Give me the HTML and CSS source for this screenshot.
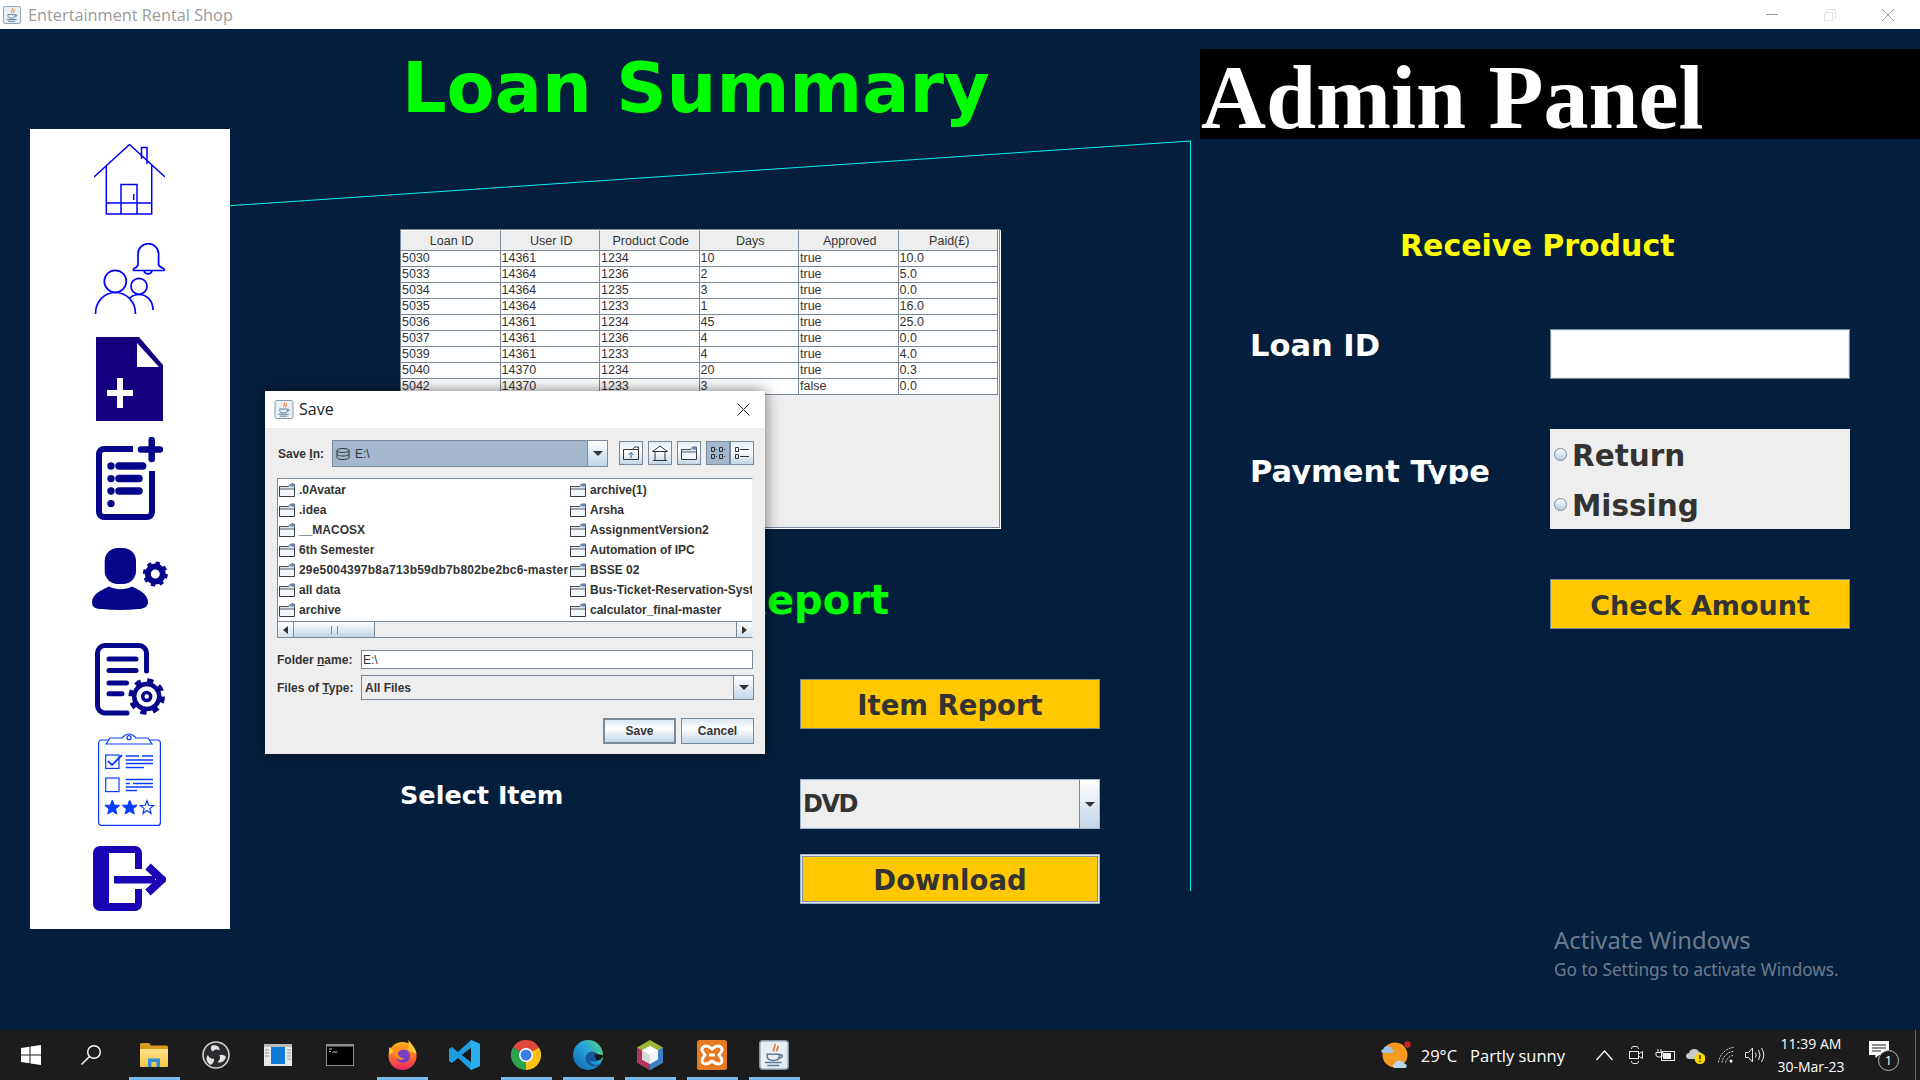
FILE: index.html
```html
<!DOCTYPE html>
<html lang="en">
<head>
    <meta charset="UTF-8">
    <title>Entertainment Rental Shop</title>
    <link rel="stylesheet" href="styles.css">
</head>
<body>
    <svg class="svg-defs" aria-hidden="true">
        <defs>
            <linearGradient id="fxGrad" x1="0" y1="0" x2="0" y2="1">
                <stop offset="0" stop-color="#ffb01f"/>
                <stop offset="0.55" stop-color="#ff6a2b"/>
                <stop offset="1" stop-color="#e8246b"/>
            </linearGradient>
            <linearGradient id="edgeGrad" x1="0" y1="1" x2="1" y2="0">
                <stop offset="0" stop-color="#0c63b8"/>
                <stop offset="0.6" stop-color="#2aa7d8"/>
                <stop offset="1" stop-color="#5fdc6a"/>
            </linearGradient>
            <linearGradient id="folderGrad" x1="0" y1="0" x2="0" y2="1">
                <stop offset="0" stop-color="#ffe38a"/>
                <stop offset="1" stop-color="#f6c445"/>
            </linearGradient>
            <symbol id="javaIcon" viewBox="0 0 20 20">
                <rect x="0.5" y="0.5" width="19" height="19" rx="2" fill="#e9eef3" stroke="#8296a8"/>
                <path d="M10.5 2.5c1.5 2-2 3-.5 5M12.5 4c.8 1.4-1.4 2-.4 3.5" fill="none" stroke="#e0762a" stroke-width="1.1"/>
                <path d="M5.5 9.5h8v1.5c0 1.8-1.6 2.6-4 2.6s-4-.8-4-2.6zM13.5 10h1.5c.8 0 .8 1.8-1.5 2" fill="none" stroke="#5a7d9a" stroke-width="1"/>
                <path d="M4 15h11M5.5 17h8" stroke="#5a7d9a" stroke-width="1"/>
            </symbol>
            <symbol id="folderIcon" viewBox="0 0 16 14">
                <path d="M.5 3.5h15v10H.5z" fill="#f3f6fa" stroke="#333a44"/>
                <path d="M.5 3.5h9l2-2.5h4v5H.5z" fill="#dfe7f0" stroke="#333a44" stroke-width=".8"/>
                <path d="M11.5 1h4v2.5h-4z" fill="#6382bf"/>
            </symbol>
            <symbol id="starFill" viewBox="-7 -7 14 13">
                <polygon points="0,-7 1.76,-2.43 6.66,-2.16 2.85,.93 4.11,5.66 0,3 -4.11,5.66 -2.85,.93 -6.66,-2.16 -1.76,-2.43" fill="#0a3cff" stroke="#0a3cff"/>
            </symbol>
        </defs>
    </svg>

    <header class="titlebar">
        <svg class="app-icon" width="20" height="18"><use href="#javaIcon"/></svg>
        <span class="app-title">Entertainment Rental Shop</span>
        <div class="window-controls">
            <svg width="12" height="12" viewBox="0 0 12 12"><path d="M0 5.5h12" stroke="#9a9a9a"/></svg>
            <svg width="12" height="12" viewBox="0 0 12 12"><path d="M.5 3.5h8v8h-8zM3 3V.5h8.5V9H9" fill="none" stroke="#e3e3e3"/></svg>
            <svg width="12" height="12" viewBox="0 0 12 12"><path d="M0 0l12 12M12 0L0 12" stroke="#9a9a9a"/></svg>
        </div>
    </header>

    <div class="app">
        <!-- cyan frame line behind the panels -->
        <svg class="frame-line" width="1920" height="1001" viewBox="0 0 1920 1001">
            <path d="M230 176.7L1190.5 112V862" fill="none" stroke="#00f0f0" stroke-width="1"/>
        </svg>

        <nav class="sidebar">
            <a class="side-item" href="#">
                <svg width="71" height="71" viewBox="0 0 71 71" fill="none" stroke="#0000ff" stroke-width="1.5">
                    <path d="M0 33L35.5 .5 71 33M12.3 21.5V70H57.7V21.5M12.3 59H57.7M27 70V40.5H43V70M39.7 50v6M47.5 15V3.5h5.5V20"/>
                </svg>
            </a>
            <a class="side-item" href="#">
                <svg width="72" height="72" viewBox="0 0 72 72" fill="none" stroke="#0000ff" stroke-width="1.7">
                    <path d="M44 22V11a10.3 10.3 0 0 1 20.6 0V22q1 2 5 3.5 1.5 1.5 0 2H40q-1.5-.5 0-2 3-1.5 4-3.5zM50 28a4.2 4 0 0 0 8 0"/>
                    <circle cx="21.3" cy="38.3" r="11"/>
                    <path d="M1.5 71c0-13 9-21.5 19.8-21.5S41.5 58 41.5 71"/>
                    <circle cx="45" cy="43.3" r="8"/>
                    <path d="M36 55c2-2 5-3.5 9-3.5 8 0 14 6.5 14 15.5"/>
                </svg>
            </a>
            <a class="side-item" href="#">
                <svg width="67" height="84" viewBox="0 0 67 84">
                    <path d="M0 0H43L67 28V84H0z" fill="#14007f"/>
                    <path d="M41 6L63 30H41z" fill="#fff"/>
                    <path d="M11 53H37V59H11zM21 41H27V71H21z" fill="#fff"/>
                </svg>
            </a>
            <a class="side-item" href="#">
                <svg width="67" height="84" viewBox="0 0 67 84" fill="none" stroke="#06068a">
                    <path d="M37 12H8a5 5 0 0 0-5 5V75a5 5 0 0 0 5 5H51a5 5 0 0 0 5-5V34" stroke-width="6"/>
                    <path d="M55.7 3V22M45 12.5H64" stroke-width="6.5" stroke-linecap="round"/>
                    <path d="M23 29H46.7M23 41.6H43M23 54H43" stroke-width="7.5" stroke-linecap="round"/>
                    <g fill="#06068a" stroke="none">
                        <circle cx="15" cy="29" r="3.7"/><circle cx="15" cy="41.6" r="3.7"/>
                        <circle cx="15" cy="54" r="3.7"/><circle cx="15" cy="66.6" r="3.7"/>
                    </g>
                </svg>
            </a>
            <a class="side-item" href="#">
                <svg width="76" height="62" viewBox="0 0 76 62" fill="#06068a">
                    <rect x="12.7" y="0" width="31.3" height="36" rx="13"/>
                    <path d="M0 54C0 46 10 42 17 38.5C24 42 33 42 40 38.5C47 42 56 46 56 54C56 60 50 61 46 61Q28 63 10 61C4 61 0 60 0 54Z"/>
                    <circle cx="63.3" cy="26" r="7.5" fill="none" stroke="#06068a" stroke-width="6"/>
                    <circle cx="63.3" cy="26" r="10.5" fill="none" stroke="#06068a" stroke-width="4" stroke-dasharray="4.1 4.15"/>
                </svg>
            </a>
            <a class="side-item" href="#">
                <svg width="70" height="73" viewBox="0 0 70 73" fill="none" stroke="#06068a" stroke-width="5" stroke-linecap="round">
                    <path d="M32 70H10a7.5 7.5 0 0 1-7.5-7.5V10A7.5 7.5 0 0 1 10 2.5H44A7.5 7.5 0 0 1 51.5 10V28"/>
                    <path d="M14 16H41M14 27.5H41M14 40H31.5M14 50.7H27"/>
                    <circle cx="51.7" cy="53.6" r="15.5" stroke-width="5.5" stroke-dasharray="6 6.17" stroke-linecap="butt"/>
                    <circle cx="51.7" cy="53.6" r="12.5" stroke-width="4.5" fill="#fff"/>
                    <circle cx="51.7" cy="53.6" r="4" stroke-width="3.5"/>
                </svg>
            </a>
            <a class="side-item" href="#">
                <svg width="63" height="94" viewBox="0 0 63 94" fill="none" stroke="#0a3cff" stroke-width="1.2">
                    <rect x=".6" y="8" width="61.8" height="85.4" rx="3"/>
                    <path d="M8 12L12 6H24Q31-2 38 6H50L54 12Z" fill="#fff"/>
                    <circle cx="31" cy="5.7" r="2"/>
                    <rect x="7.7" y="23" width="13.3" height="13.4"/>
                    <path d="M10 29l4 4 10-10" stroke-width="1.8"/>
                    <rect x="7.7" y="46" width="13.3" height="13.6"/>
                    <path d="M27.7 24H41M44 24H55M27.7 28H55M27.7 31.5H55M27.7 35.5H46M27.7 47.5H55M27.7 51.5H32M35 51.5H55M27.7 55H55M27.7 58.5H39" stroke-width="1.3"/>
                    <use href="#starFill" x="6.8" y="68.2" width="15" height="14"/>
                    <use href="#starFill" x="24.2" y="68.2" width="15" height="14"/>
                    <polygon transform="translate(49 75.7)" points="0,-7 1.76,-2.43 6.66,-2.16 2.85,.93 4.11,5.66 0,3 -4.11,5.66 -2.85,.93 -6.66,-2.16 -1.76,-2.43"/>
                </svg>
            </a>
            <a class="side-item" href="#">
                <svg width="73" height="66" viewBox="0 0 73 66" fill="#1a05b5">
                    <path d="M7 0H42A7 7 0 0 1 49 7V23H42V7H16V57H42V43H49V58A7 7 0 0 1 42 65H7A7 7 0 0 1 0 58V7A7 7 0 0 1 7 0Z"/>
                    <path d="M21 30H62V37.5H21z"/>
                    <path d="M55 20.5L69 33.5 55 46.5" fill="none" stroke="#1a05b5" stroke-width="8"/>
                </svg>
            </a>
        </nav>

        <section class="center-col">
            <h1 class="page-title">Loan Summary</h1>

            <div class="table-panel">
                <table class="loan-table">
                    <thead>
                        <tr><th>Loan ID</th><th>User ID</th><th>Product Code</th><th>Days</th><th>Approved</th><th>Paid(£)</th></tr>
                    </thead>
                    <tbody>
                        <tr><td>5030</td><td>14361</td><td>1234</td><td>10</td><td>true</td><td>10.0</td></tr>
                        <tr><td>5033</td><td>14364</td><td>1236</td><td>2</td><td>true</td><td>5.0</td></tr>
                        <tr><td>5034</td><td>14364</td><td>1235</td><td>3</td><td>true</td><td>0.0</td></tr>
                        <tr><td>5035</td><td>14364</td><td>1233</td><td>1</td><td>true</td><td>16.0</td></tr>
                        <tr><td>5036</td><td>14361</td><td>1234</td><td>45</td><td>true</td><td>25.0</td></tr>
                        <tr><td>5037</td><td>14361</td><td>1236</td><td>4</td><td>true</td><td>0.0</td></tr>
                        <tr><td>5039</td><td>14361</td><td>1233</td><td>4</td><td>true</td><td>4.0</td></tr>
                        <tr><td>5040</td><td>14370</td><td>1234</td><td>20</td><td>true</td><td>0.3</td></tr>
                        <tr><td>5042</td><td>14370</td><td>1233</td><td>3</td><td>false</td><td>0.0</td></tr>
                    </tbody>
                </table>
            </div>

            <h2 class="report-title">Report</h2>

            <div class="report-form">
                <button class="yellow-btn item-report" type="button">Item Report</button>
                <span class="select-label">Select Item</span>
                <div class="big-combo">
                    <span class="big-combo-value">DVD</span>
                    <span class="big-combo-arrow"><i class="arrow-down"></i></span>
                </div>
                <button class="yellow-btn download" type="button">Download</button>
            </div>
        </section>

        <section class="right-col">
            <div class="admin-bar">Admin Panel</div>
            <h2 class="receive-title">Receive Product</h2>
            <div class="receive-form">
                <label class="form-label" for="loanId">Loan ID</label>
                <input class="loan-input" id="loanId" type="text">
                <span class="form-label payment-label">Payment Type</span>
                <div class="radio-panel">
                    <label class="radio-row"><i class="radio-dot"></i>Return</label>
                    <label class="radio-row"><i class="radio-dot"></i>Missing</label>
                </div>
                <button class="yellow-btn check-amount" type="button">Check Amount</button>
            </div>
        </section>

        <div class="activate">
            <div class="activate-head">Activate Windows</div>
            <div class="activate-sub">Go to Settings to activate Windows.</div>
        </div>

        <div class="save-dialog">
            <div class="dialog-title">
                <svg width="20" height="19"><use href="#javaIcon"/></svg>
                <span class="dialog-name">Save</span>
                <svg class="dialog-close" width="13" height="13" viewBox="0 0 13 13"><path d="M.5.5l12 12M12.5.5l-12 12" stroke="#222" stroke-width="1"/></svg>
            </div>
            <div class="dialog-body">
                <div class="save-in-row">
                    <span class="dlg-label save-in-label">Save <u>I</u>n:</span>
                    <div class="dlg-combo save-in-combo">
                        <span class="dlg-combo-value selected">
                            <svg width="14" height="12" viewBox="0 0 14 12" fill="none" stroke="#333"><ellipse cx="7" cy="2.5" rx="6" ry="2"/><path d="M1 2.5v7c0 1 2.5 2 6 2s6-1 6-2v-7M1 6c0 1 2.5 2 6 2s6-1 6-2"/></svg>
                            <span>E:\</span>
                        </span>
                        <span class="dlg-combo-arrow"><i class="arrow-down"></i></span>
                    </div>
                    <div class="dlg-tools">
                        <span class="tool-btn">
                            <svg width="16" height="14" viewBox="0 0 16 14" fill="none" stroke="#333"><path d="M.5 3.5h15v10H.5zM9.5 3.5l2-2.5h4v2.5"/><path d="M8 12V6.5M5.5 9L8 6.5 10.5 9" stroke="#2b5f8e"/></svg>
                        </span>
                        <span class="tool-btn">
                            <svg width="16" height="16" viewBox="0 0 16 16" fill="none" stroke="#333"><path d="M.5 6.5L8 1l7.5 5.5zM3 6.5v9h10v-9M1 15.5h14"/></svg>
                        </span>
                        <span class="tool-btn">
                            <svg width="16" height="14" viewBox="0 0 16 14"><use href="#folderIcon"/></svg>
                        </span>
                        <span class="tool-btn tool-pressed tool-joined">
                            <svg width="16" height="14" viewBox="0 0 16 14" fill="none" stroke="#333"><path d="M1.5 1.5h3v4h-3zM1.5 8.5h3v4h-3zM9.5 1.5h3v4h-3zM9.5 8.5h3v4h-3zM6 3.5h1M6 10.5h1M14 3.5h1M14 10.5h1"/></svg>
                        </span>
                        <span class="tool-btn">
                            <svg width="16" height="14" viewBox="0 0 16 14" fill="none" stroke="#333"><path d="M1.5 1.5h3v4h-3zM1.5 8.5h3v4h-3zM6 3.5h9M6 10.5h9"/></svg>
                        </span>
                    </div>
                </div>

                <div class="file-list">
                    <div class="file-grid">
                        <div class="file-item"><svg width="16" height="14"><use href="#folderIcon"/></svg><span>.0Avatar</span></div>
                        <div class="file-item"><svg width="16" height="14"><use href="#folderIcon"/></svg><span>archive(1)</span></div>
                        <div class="file-item"><svg width="16" height="14"><use href="#folderIcon"/></svg><span>.idea</span></div>
                        <div class="file-item"><svg width="16" height="14"><use href="#folderIcon"/></svg><span>Arsha</span></div>
                        <div class="file-item"><svg width="16" height="14"><use href="#folderIcon"/></svg><span>__MACOSX</span></div>
                        <div class="file-item"><svg width="16" height="14"><use href="#folderIcon"/></svg><span>AssignmentVersion2</span></div>
                        <div class="file-item"><svg width="16" height="14"><use href="#folderIcon"/></svg><span>6th Semester</span></div>
                        <div class="file-item"><svg width="16" height="14"><use href="#folderIcon"/></svg><span>Automation of IPC</span></div>
                        <div class="file-item"><svg width="16" height="14"><use href="#folderIcon"/></svg><span class="long-name">29e5004397b8a713b59db7b802be2bc6-master</span></div>
                        <div class="file-item"><svg width="16" height="14"><use href="#folderIcon"/></svg><span>BSSE 02</span></div>
                        <div class="file-item"><svg width="16" height="14"><use href="#folderIcon"/></svg><span>all data</span></div>
                        <div class="file-item"><svg width="16" height="14"><use href="#folderIcon"/></svg><span>Bus-Ticket-Reservation-System</span></div>
                        <div class="file-item"><svg width="16" height="14"><use href="#folderIcon"/></svg><span>archive</span></div>
                        <div class="file-item"><svg width="16" height="14"><use href="#folderIcon"/></svg><span>calculator_final-master</span></div>
                    </div>
                    <div class="h-scroll">
                        <span class="scroll-btn"><i class="arrow-left"></i></span>
                        <span class="scroll-thumb"><i class="thumb-grip"></i></span>
                        <span class="scroll-track"></span>
                        <span class="scroll-btn"><i class="arrow-right"></i></span>
                    </div>
                </div>

                <div class="dlg-field folder-row">
                    <span class="dlg-label field-label">Folder <u>n</u>ame:</span>
                    <input class="dlg-input" type="text" value="E:\">
                </div>
                <div class="dlg-field type-row">
                    <span class="dlg-label field-label">Files of <u>T</u>ype:</span>
                    <div class="dlg-combo type-combo">
                        <span class="dlg-combo-value">All Files</span>
                        <span class="dlg-combo-arrow"><i class="arrow-down"></i></span>
                    </div>
                </div>
                <div class="dlg-actions">
                    <button class="dlg-btn dlg-default" type="button">Save</button>
                    <button class="dlg-btn" type="button">Cancel</button>
                </div>
            </div>
        </div>
    </div>

    <footer class="taskbar">
        <div class="task-left">
            <span class="task-item start-item">
                <svg width="20" height="20" viewBox="0 0 20 20" fill="#fff"><path d="M0 3l8.500-1.300V9.500H0zM9.500 1.500L20 0V9.500H9.500zM0 10.500H8.500V18.300L0 17zM9.500 10.500H20V20L9.500 18.500z"/></svg>
            </span>
            <span class="task-item search-item">
                <svg width="20" height="20" viewBox="0 0 20 20" fill="none" stroke="#fff" stroke-width="1.4"><circle cx="13" cy="7" r="6.3"/><path d="M8.500 11.500L.5 19.500"/></svg>
            </span>
            <span class="task-item active">
                <svg width="28" height="24" viewBox="0 0 28 24"><path d="M0 1.500Q0 0 1.500 0H9l2 2.500h15.500Q28 2.500 28 4V22.500Q28 24 26.500 24H1.500Q0 24 0 22.500z" fill="#d99a1c"/><path d="M0 6H28V22.500Q28 24 26.500 24H1.500Q0 24 0 22.500z" fill="url(#folderGrad)"/><path d="M8 24V15.500H20V24H16.500V19H11.500V24z" fill="#2f8fd6"/></svg>
            </span>
            <span class="task-item">
                <svg width="28" height="28" viewBox="0 0 28 28"><circle cx="14" cy="14" r="13" fill="#2a2a2e" stroke="#d2d2d2" stroke-width="1.6"/><path d="M10 4.500c5-1 8 1.500 7.500 5-1.500-1.500-5-1.800-6.500 1-2-1-3-4 -1-6zM24 16c-1.500 5-5.500 6.500-8.500 5 1.800-1 3.500-4 1.800-6.700 2-1.300 5.200-.6 6.700 1.700zM8.500 24c-4.500-3-5-7.500-2.500-10 .5 2 3.500 4.500 6 3.500.5 2.300-.8 5.300-3.500 6.500z" fill="#e4e4e4"/></svg>
            </span>
            <span class="task-item">
                <svg width="28" height="22" viewBox="0 0 28 22"><rect width="28" height="22" fill="#e9e9e9"/><rect y="0" width="28" height="3" fill="#b9b9b9"/><rect x="7" y="3" width="14" height="17" fill="#0f7bd8"/><path d="M1 6h4M1 9h4M1 12h4M23 6h4M23 9h4M23 12h4M23 15h4" stroke="#999"/></svg>
            </span>
            <span class="task-item">
                <svg width="28" height="22" viewBox="0 0 28 22"><rect width="28" height="22" fill="#8d8d8d"/><rect x="1" y="2.5" width="26" height="18.5" fill="#000"/><path d="M3 5h3M3 7.5h2M6.500 8h5" stroke="#c8c8c8"/></svg>
            </span>
            <span class="task-item active">
                <svg width="29" height="30" viewBox="0 0 29 30"><circle cx="14.5" cy="16" r="14" fill="url(#fxGrad)"/><path d="M20 0c3 3 8 8 8.500 14L20 10c1-3 1-6 0-10zM1 7l5 4-5 4z" fill="#ffc631"/><circle cx="15" cy="16" r="7" fill="#7b3ec2"/><path d="M5 11c4-5 10-4 13-1-4-1-7 0-8 3 0 3 3 6 7 5-4 4-11 1-12-7z" fill="#ff8a1e"/></svg>
            </span>
            <span class="task-item">
                <svg width="31" height="30" viewBox="0 0 31 30"><path d="M22 0L31 4V26L22 30 9 18 3 23 0 21V9L3 7 9 12zM22 8L13 15 22 22z" fill="#1f9ce0"/><path d="M22 0L31 4V26L22 30z" fill="#2ab0ef"/><path d="M22 8L13 15 22 22z" fill="#191919"/></svg>
            </span>
            <span class="task-item active">
                <svg width="30" height="30" viewBox="0 0 30 30"><path d="M15 15L2 7.500A15 15 0 0 1 28 7.500z" fill="#dd4a3a"/><path d="M15 15L28 7.500A15 15 0 0 1 15 30z" fill="#fbc116"/><path d="M15 15L15 30A15 15 0 0 1 2 7.500z" fill="#2ca14e"/><circle cx="15" cy="15" r="7" fill="#fff"/><circle cx="15" cy="15" r="5.5" fill="#3b7de8"/></svg>
            </span>
            <span class="task-item active">
                <svg width="30" height="30" viewBox="0 0 30 30"><circle cx="15" cy="15" r="15" fill="url(#edgeGrad)"/><path d="M30 17c-3-7-12-8-16-3-3 4-1 10 4 12 5 1.500 9 0 11-3-5 3-11 2-12-2 4 1 10 1 13-4z" fill="#15589f"/><path d="M16 12c5-2 11 1 14 8 0-3 0-4-.5-6-4-3-9-4-13.500-2z" fill="#5fdc6a"/><path d="M31 15.500c-3-1-7-2-10 0 1 1 2 3 2 4.500 3 .5 6-1 8-4.500z" fill="#191919"/></svg>
            </span>
            <span class="task-item active">
                <svg width="26" height="30" viewBox="0 0 26 30"><path d="M13 0L26 7.500V22.500L13 30 0 22.500V7.500z" fill="#9ab53a"/><path d="M0 7.500L13 15V30L0 22.500z" fill="#b3325f"/><path d="M26 7.500L13 15V30L26 22.500z" fill="#3d7fc9"/><path d="M13 6L21 10.500V19.500L13 24 5 19.500V10.500z" fill="#f4f4f4"/><path d="M13 15L21 10.500 13 6 5 10.500z" fill="#fff"/><path d="M13 15V24L5 19.500V10.500z" fill="#d7d7d7"/></svg>
            </span>
            <span class="task-item active">
                <svg width="30" height="30" viewBox="0 0 30 30"><rect width="30" height="30" rx="2.5" fill="#e57a20"/><path d="M9 6c3 0 4 2 6 3 2-1 3-3 6-3 3.500 0 5 3 3.500 5.500L22 15l2.500 3.500C26 21 24.500 24 21 24c-3 0-4-2-6-3-2 1-3 3-6 3-3.500 0-5-3-3.500-5.500L8 15l-2.500-3.500C4 9 5.500 6 9 6z" fill="none" stroke="#fff" stroke-width="3"/><path d="M12 15h6" stroke="#fff" stroke-width="3"/></svg>
            </span>
            <span class="task-item active">
                <svg width="30" height="30" viewBox="0 0 30 30"><use href="#javaIcon"/></svg>
            </span>
        </div>

        <div class="task-right">
            <svg class="tray-weather" width="30" height="28" viewBox="0 0 30 28"><circle cx="14" cy="14" r="12.5" fill="#f39a1f"/><circle cx="26.5" cy="3.5" r="3.2" fill="#c9261d"/><path d="M2 12c-2.500 0-2-4 .5-4 .5-4 7-4 8 0 3 0 3 4 0 4z" fill="#9fc4e8"/><path d="M14 27c-3 0-3-4 0-4.500.5-4 8-4 9 0 3 0 4 4.500 1 4.500z" fill="#bcd6ef"/></svg>
            <span class="tray-text">29°C<span class="weather-gap"></span>Partly sunny</span>
            <svg class="tray-caret" width="17" height="11" viewBox="0 0 17 11" fill="none" stroke="#fff" stroke-width="1.2"><path d="M.5 10L8.500 1l8 9"/></svg>
            <svg class="tray-cam" width="14" height="18" viewBox="0 0 14 18" fill="none" stroke="#e8e8e8"><path d="M2.500 3C2.500 1.500 3 .5 5 .5h2c2 0 2.500 1 2.500 2.500M2.500 15c0 1.500.5 2.500 2.500 2.500h2c2 0 2.500-1 2.500-2.500"/><rect x=".5" y="5.5" width="9" height="7"/><path d="M9.500 8l4-2.500v7l-4-2.500"/></svg>
            <svg class="tray-batt" width="20" height="12" viewBox="0 0 20 12"><path d="M3 3V0M6 3V0M1 3.500h7V6Q8 8 5 8H4Q1 8 1 6z" fill="none" stroke="#eee"/><rect x="6.5" y="2.5" width="13" height="9" fill="none" stroke="#eee"/><rect x="8" y="4" width="8" height="6" fill="#eee"/></svg>
            <svg class="tray-cloud" width="20" height="17" viewBox="0 0 20 17"><path d="M4 12C0 12 0 6 4 6c1-5 9-5 10-1 3 0 4 3 2 7z" fill="#c9c9c9"/><circle cx="15" cy="11.5" r="5.5" fill="#f8d800"/><path d="M15 8v4M15 13.500v1.500" stroke="#222" stroke-width="1.4"/></svg>
            <svg class="tray-wifi" width="16" height="16" viewBox="0 0 16 16" fill="none" stroke="#cfcfcf"><path d="M.5 15.500C1 8 8 1 15.500 .5M4 15.500C4.500 10 10 4.500 15.500 4.500M7.500 15.500C8 12.500 12 8.500 15 8.500" stroke-dasharray="2 1"/><circle cx="13" cy="14" r="1.5" fill="#fff" stroke="none"/></svg>
            <svg class="tray-sound" width="20" height="16" viewBox="0 0 20 16" fill="none" stroke="#e8e8e8"><path d="M.5 5.500h3l4-4.500v14l-4-4.500h-3zM10.500 5.500q1.500 2.500 0 5M13.500 3q3 5 0 10M16.500 1q4.500 7 0 14"/></svg>
            <div class="tray-clock"><span>11:39 AM</span><span>30-Mar-23</span></div>
            <div class="tray-notify">
                <svg width="20" height="17" viewBox="0 0 20 17"><path d="M0 0H20V14H10L6.500 17V14H0z" fill="#fff"/><path d="M3 4H17M3 7H17M3 10H12" stroke="#1c1c1c"/></svg>
                <span class="notify-badge">1</span>
            </div>
            <i class="show-desktop"></i>
        </div>
    </footer>
</body>
</html>
```

FILE: styles.css
```css
html, body {
    margin: 0;
    padding: 0;
    width: 1920px;
    height: 1080px;
    overflow: hidden;
}

body {
    font-family: "Liberation Sans", Arial, sans-serif;
    background-color: #041f3e;
    display: flex;
    flex-direction: column;
}

.svg-defs {
    position: absolute;
    width: 0;
    height: 0;
}

/* Window title bar */
.titlebar {
    height: 29px;
    background-color: #fff;
    display: flex;
    align-items: center;
    flex-shrink: 0;
}

.app-icon {
    margin-left: 2px;
}

.app-title {
    margin-left: 6px;
    font-family: "Open Sans", sans-serif;
    font-size: 16.3px;
    color: #9a9a9a;
}

.window-controls {
    margin-left: auto;
    margin-right: 26px;
    display: flex;
    gap: 46px;
}

/* Main application frame */
.app {
    position: relative;
    height: 1001px;
    display: grid;
    grid-template-columns: 200px 970px 720px;
    padding-left: 30px;
    box-sizing: border-box;
    flex-shrink: 0;
}

.frame-line {
    position: absolute;
    left: 0;
    top: 0;
}

.sidebar {
    position: relative;
    margin-top: 100px;
    width: 200px;
    height: 800px;
    background-color: #fff;
    display: grid;
    grid-template-rows: repeat(8, 100px);
}

.side-item {
    display: flex;
    align-items: center;
    justify-content: center;
    padding-right: 1px;
}

/* Center column */
.center-col {
    position: relative;
    padding-left: 170px;
    padding-top: 19px;
}

.page-title {
    margin: 0;
    padding-left: 2px;
    font-family: "DejaVu Sans", sans-serif;
    font-size: 70px;
    line-height: 80px;
    font-weight: bold;
    color: #00ff00;
}

.table-panel {
    margin-top: 101px;
    width: 600px;
    height: 299px;
    box-sizing: border-box;
    background-color: #eee;
    border: 1px solid #7a8a99;
    box-shadow: 1px 1px 0 #fff;
}

.loan-table {
    width: 597px;
    table-layout: fixed;
    border-collapse: separate;
    border-spacing: 0;
    font-size: 12.5px;
    color: #333;
}

.loan-table th {
    height: 19px;
    padding: 0 0 0 3px;
    font-weight: normal;
    text-align: center;
    background-color: #eee;
    border-top: 1px solid #fff;
    border-right: 1px solid #7a8a99;
    border-bottom: 1px solid #7a8a99;
    box-sizing: content-box;
}

.loan-table td {
    height: 15px;
    line-height: 15px;
    padding: 0 0 0 1px;
    background-color: #fff;
    border-right: 1px solid #7a8a99;
    border-bottom: 1px solid #7a8a99;
    white-space: nowrap;
}

.report-title {
    margin: 42px 0 0 0;
    width: 489px;
    text-align: right;
    font-family: "DejaVu Sans", sans-serif;
    font-size: 40px;
    line-height: 60px;
    font-weight: bold;
    color: #00ff00;
}

.report-form {
    margin-top: 49px;
    display: grid;
    grid-template-columns: 400px 300px;
}

.yellow-btn {
    height: 50px;
    background-color: #ffc800;
    border: 1px solid #7a8a99;
    box-sizing: border-box;
    font-family: "DejaVu Sans", sans-serif;
    font-weight: bold;
    font-size: 27.5px;
    color: #333;
    padding: 2px 0 0 0;
}

.item-report {
    grid-column: 2;
}

.select-label {
    grid-column: 1;
    margin-top: 50px;
    font-family: "DejaVu Sans", sans-serif;
    font-weight: bold;
    font-size: 25.5px;
    line-height: 32px;
    color: #fff;
}

.big-combo {
    grid-column: 2;
    margin-top: 50px;
    height: 50px;
    box-sizing: border-box;
    border: 1px solid #a3b8cc;
    background-color: #eee;
    display: flex;
}

.big-combo-value {
    flex: 1;
    padding-left: 2px;
    font-family: "DejaVu Sans", sans-serif;
    font-weight: bold;
    font-size: 24px;
    letter-spacing: -1.5px;
    line-height: 48px;
    color: #333;
}

.big-combo-arrow {
    width: 19px;
    display: flex;
    align-items: center;
    justify-content: center;
    border-left: 1px solid #7a8a99;
    background: linear-gradient(#fff, #c2d4e6);
}

.download {
    grid-column: 2;
    margin-top: 25px;
    border: 1px solid #9db2c7;
    box-shadow: inset 0 0 0 1px #dfe8f0, inset 0 0 0 2px #7f93a8;
}

.arrow-down {
    display: block;
    width: 0;
    height: 0;
    border-left: 5px solid transparent;
    border-right: 5px solid transparent;
    border-top: 5px solid #333;
}

/* Right column */
.right-col {
    padding-top: 20px;
}

.admin-bar {
    height: 90px;
    box-sizing: border-box;
    padding: 8px 0 0 1px;
    background-color: #000;
    color: #fff;
    font-family: "Liberation Serif", "Times New Roman", serif;
    font-weight: bold;
    font-size: 90px;
    line-height: 82px;
    white-space: nowrap;
}

.receive-title {
    margin: 88px 0 0 200px;
    font-family: "DejaVu Sans", sans-serif;
    font-size: 30px;
    line-height: 38px;
    font-weight: bold;
    color: #ffff00;
}

.receive-form {
    margin-top: 64px;
    padding-left: 50px;
    display: grid;
    grid-template-columns: 300px 300px;
}

.form-label {
    font-family: "DejaVu Sans", sans-serif;
    font-weight: bold;
    font-size: 30.5px;
    line-height: 33px;
    color: #fff;
}

.loan-input {
    height: 50px;
    box-sizing: border-box;
    border: 1px solid #7a8a99;
    border-bottom-width: 2px;
    background-color: #fff;
    outline: 1px solid #e8eef4;
    outline-offset: -2px;
}

.payment-label {
    margin-top: 76px;
    height: 29px;
    overflow: hidden;
    align-self: start;
}

.radio-panel {
    margin-top: 50px;
    height: 100px;
    background-color: #eee;
    display: flex;
    flex-direction: column;
}

.radio-row {
    height: 50px;
    box-sizing: border-box;
    padding: 3px 0 0 4px;
    display: flex;
    align-items: center;
    font-family: "DejaVu Sans", sans-serif;
    font-weight: bold;
    font-size: 29.5px;
    color: #333;
}

.radio-dot {
    width: 11px;
    height: 11px;
    margin: -3px 5px 0 0;
    border-radius: 50%;
    border: 1px solid #7a8a99;
    background: linear-gradient(#fff, #b8cde0);
    flex-shrink: 0;
}

.check-amount {
    grid-column: 2;
    margin-top: 50px;
    font-size: 27px;
}

.activate {
    position: absolute;
    left: 1554px;
    top: 896px;
    font-family: "Noto Sans", sans-serif;
    color: rgba(255, 255, 255, 0.42);
}

.activate-head {
    font-size: 23.8px;
    line-height: 30px;
}

.activate-sub {
    font-size: 17.2px;
    line-height: 29px;
}

/* Save dialog */
.save-dialog {
    position: absolute;
    left: 265px;
    top: 362px;
    width: 500px;
    height: 363px;
    background-color: #eee;
    box-shadow: 0 0 14px rgba(0, 0, 0, 0.55);
    font-size: 12px;
    color: #333;
    display: flex;
    flex-direction: column;
}

.dialog-title {
    height: 37px;
    flex-shrink: 0;
    background-color: #fff;
    display: flex;
    align-items: center;
    padding-left: 9px;
    font-family: "Open Sans", sans-serif;
    font-size: 16px;
    color: #222;
    gap: 5px;
}

.dialog-name {
    margin-bottom: 2px;
}

.dialog-close {
    margin-left: auto;
    margin-right: 15px;
}

.dialog-body {
    padding: 12px 11px 0 12px;
}

.dlg-label {
    font-weight: bold;
    white-space: nowrap;
}

.save-in-row {
    display: flex;
    align-items: center;
    height: 27px;
}

.save-in-label {
    width: 55px;
    padding-left: 1px;
    box-sizing: border-box;
}

.dlg-combo {
    display: flex;
    box-sizing: border-box;
    border: 1px solid #7a8a99;
    background-color: #eee;
}

.save-in-combo {
    width: 276px;
    height: 27px;
}

.type-combo {
    width: 393px;
    height: 25px;
}

.dlg-combo-value {
    flex: 1;
    display: flex;
    align-items: center;
    gap: 5px;
    padding-left: 3px;
    font-weight: bold;
}

.dlg-combo-value.selected {
    background-color: #a3b8cc;
    font-weight: normal;
}

.dlg-combo-arrow {
    width: 19px;
    display: flex;
    align-items: center;
    justify-content: center;
    border-left: 1px solid #7a8a99;
    background: linear-gradient(#fff, #c2d4e6);
}

.dlg-tools {
    margin: -1px 0 0 11px;
    display: flex;
    gap: 5px;
}

.tool-btn {
    width: 24px;
    height: 24px;
    box-sizing: border-box;
    border: 1px solid #7a8a99;
    background: linear-gradient(#e3edf6, #fff 40%, #c5d6e6);
    display: flex;
    align-items: center;
    justify-content: center;
}

.tool-pressed {
    background: #a3b8cc;
}

.tool-joined {
    margin-right: -5px;
}

.file-list {
    margin-top: 11px;
    width: 476px;
    height: 160px;
    box-sizing: border-box;
    background-color: #fff;
    border: 1px solid #7a8a99;
    border-right-color: #eee;
    border-bottom-color: #7a8a99;
    display: flex;
    flex-direction: column;
}

.file-grid {
    height: 142px;
    padding: 1px 0 0 1px;
    box-sizing: border-box;
    display: grid;
    grid-template-columns: 291px 183px;
    grid-auto-rows: 20px;
    overflow: hidden;
}

.file-item {
    display: flex;
    align-items: center;
    gap: 4px;
    font-weight: bold;
    white-space: nowrap;
    overflow: hidden;
}

.file-item svg {
    flex-shrink: 0;
}

.long-name {
    letter-spacing: 0.2px;
}

.h-scroll {
    height: 16px;
    display: flex;
    background-color: #eee;
    border-top: 1px solid #7a8a99;
    box-sizing: border-box;
}

.scroll-btn {
    width: 15px;
    display: flex;
    align-items: center;
    justify-content: center;
    background: linear-gradient(#fff, #d5e1ec);
}

.scroll-thumb {
    width: 80px;
    display: flex;
    align-items: center;
    justify-content: center;
    border: 1px solid #7a8a99;
    border-width: 0 1px;
    background: linear-gradient(#fff, #c2d4e6);
}

.scroll-track {
    flex: 1;
    border-right: 1px solid #7a8a99;
}

.thumb-grip {
    width: 5px;
    height: 8px;
    border-left: 1px solid #7a8a99;
    border-right: 1px solid #7a8a99;
}

.arrow-left {
    border-top: 4px solid transparent;
    border-bottom: 4px solid transparent;
    border-right: 5px solid #333;
}

.arrow-right {
    border-top: 4px solid transparent;
    border-bottom: 4px solid transparent;
    border-left: 5px solid #333;
}

.dlg-field {
    display: flex;
    align-items: center;
}

.field-label {
    width: 84px;
}

.folder-row {
    margin-top: 12px;
    height: 19px;
}

.type-row {
    margin-top: 6px;
    height: 25px;
}

.dlg-input {
    width: 392px;
    height: 19px;
    box-sizing: border-box;
    padding: 0 1px;
    font-family: "Liberation Sans", Arial, sans-serif;
    font-size: 12px;
    color: #333;
    border: 1px solid #7a8a99;
    background-color: #fff;
}

.dlg-actions {
    margin-top: 18px;
    display: flex;
    justify-content: flex-end;
    gap: 5px;
}

.dlg-btn {
    width: 73px;
    height: 26px;
    box-sizing: border-box;
    padding: 0;
    border: 1px solid #7a8a99;
    background: linear-gradient(#dce8f3, #fff 40%, #c2d4e6);
    font-family: "Liberation Sans", Arial, sans-serif;
    font-weight: bold;
    font-size: 12px;
    color: #333;
}

.dlg-default {
    border-width: 2px;
}

/* Taskbar */
.taskbar {
    height: 50px;
    flex-shrink: 0;
    background-color: #1c1c1c;
    display: flex;
    align-items: stretch;
    justify-content: space-between;
}

.task-left {
    display: flex;
}

.task-item {
    position: relative;
    width: 62px;
    display: flex;
    align-items: center;
    justify-content: center;
}

.start-item {
    width: 61px;
}

.search-item {
    padding-right: 2px;
    box-sizing: border-box;
}

.task-item.active::after {
    content: "";
    position: absolute;
    left: 6px;
    right: 5px;
    bottom: 0;
    height: 3px;
    background-color: #76b9ed;
}

.task-right {
    display: flex;
    align-items: center;
    color: #fff;
    font-family: "Open Sans", sans-serif;
}

.tray-text {
    margin-left: 10px;
    font-size: 16.5px;
}

.weather-gap {
    display: inline-block;
    width: 13px;
}

.tray-caret {
    margin-left: 31px;
}

.tray-cam {
    margin-left: 16px;
}

.tray-batt {
    margin-left: 12px;
}

.tray-cloud {
    margin-left: 10px;
}

.tray-wifi {
    margin-left: 13px;
}

.tray-sound {
    margin-left: 11px;
}

.tray-clock {
    margin-left: 11px;
    width: 70px;
    display: flex;
    flex-direction: column;
    align-items: center;
    font-size: 14px;
    line-height: 23px;
}

.tray-notify {
    position: relative;
    margin-left: 23px;
    margin-right: 1px;
    width: 30px;
    height: 30px;
    margin-top: 2px;
}

.notify-badge {
    position: absolute;
    left: 9px;
    top: 9px;
    width: 19px;
    height: 19px;
    border: 1px solid #b8b8b8;
    border-radius: 50%;
    background-color: #1c1c1c;
    text-align: center;
    font-size: 13px;
    line-height: 19px;
}

.show-desktop {
    width: 1px;
    height: 100%;
    margin: 0 4px 0 15px;
    background-color: #666;
}
```
